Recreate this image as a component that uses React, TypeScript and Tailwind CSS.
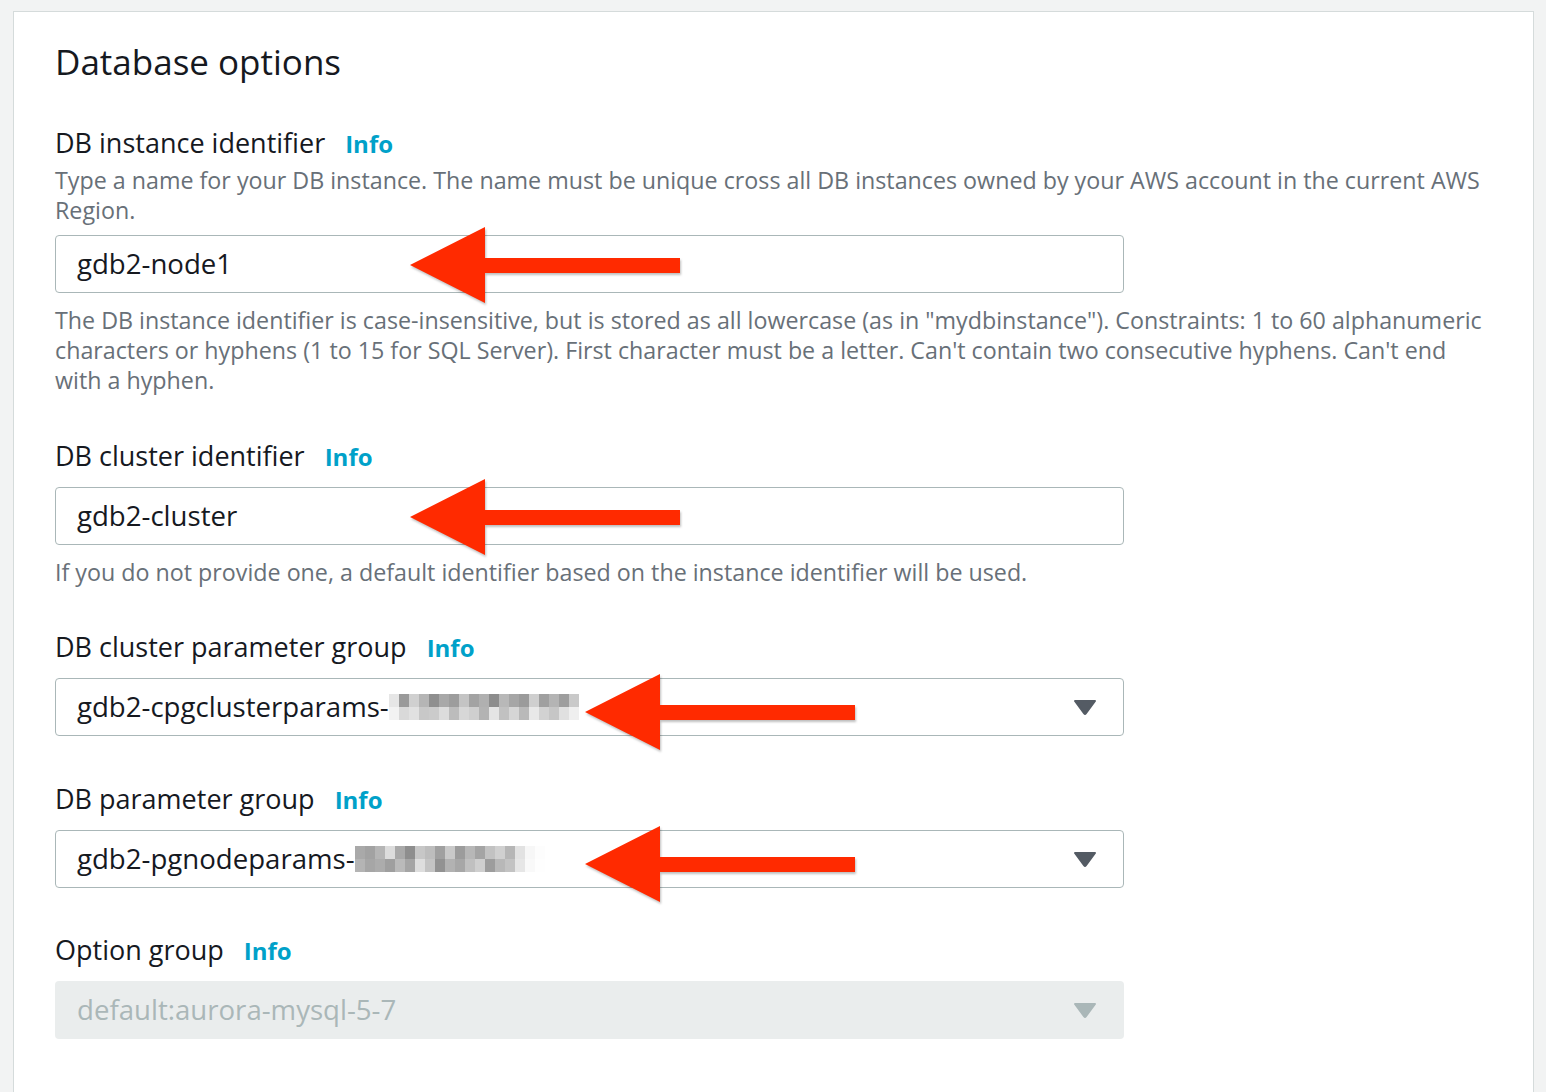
import React from 'react';

const font = { fontFamily: '"Open Sans", "Noto Sans", sans-serif' };

// little pixelated blur that hides part of a value
const Mosaic = ({ cells }: { cells: string[][] }) => (
  <span className="inline-flex flex-col align-middle">
    {cells.map((row, i) => (
      <span key={i} className="flex">
        {row.map((c, j) => (
          <span key={j} className="w-[10px] h-[13px]" style={{ backgroundColor: c }} />
        ))}
      </span>
    ))}
  </span>
);

const Arrow = ({ className }: { className: string }) => (
  <svg
    className={`absolute pointer-events-none drop-shadow-[1px_2px_1px_rgba(0,0,0,0.25)] ${className}`}
    width="272"
    height="76"
    viewBox="0 0 272 76"
  >
    <polygon points="0,38 75,0 75,31 270,31 270,46 75,46 75,76" fill="#ff2a00" />
  </svg>
);

const Label = ({ text }: { text: string }) => (
  <div className="flex items-baseline gap-[20px] h-[36px] leading-[36px]">
    <span className="text-[27px] text-[#16191f]">{text}</span>
    <span className="text-[24px] font-bold text-[#00a1c9]">Info</span>
  </div>
);

const Caret = ({ color }: { color: string }) => (
  <svg width="24" height="16" viewBox="0 0 24 16" className="ml-auto">
    <path d="M2 2 L22 2 L12.8 14.4 Q12 15.4 11.2 14.4 Z" fill={color} stroke={color} strokeWidth="2" strokeLinejoin="round" />
  </svg>
);

const mosaicA = [
  ['#e6e6e6', '#9a9a9a', '#d0d0d0', '#b5b5b5', '#8f8f8f', '#a8a8a8', '#9d9d9d', '#c4c4c4', '#a3a3a3', '#b0b0b0', '#8d8d8d', '#b8b8b8', '#a6a6a6', '#9b9b9b', '#cfcfcf', '#a0a0a0', '#b4b4b4', '#9e9e9e', '#c9c9c9'],
  ['#f2f2f2', '#d9d9d9', '#e1e1e1', '#c8c8c8', '#cbcbcb', '#dcdcdc', '#bcbcbc', '#d7d7d7', '#cfcfcf', '#b3b3b3', '#e4e4e4', '#c1c1c1', '#d6d6d6', '#b9b9b9', '#e8e8e8', '#d2d2d2', '#c6c6c6', '#e0e0e0', '#efefef'],
];

const mosaicB = [
  ['#a9a9a9', '#a2a2a2', '#b5b5b5', '#dcdcdc', '#a9a9a9', '#8e8e8e', '#c7c7c7', '#bdbdbd', '#a0a0a0', '#c9c9c9', '#9c9c9c', '#b7b7b7', '#a4a4a4', '#c2c2c2', '#d0d0d0', '#b6b6b6', '#e2e2e2', '#f7f7f7', '#fdfdfd'],
  ['#b4b4b4', '#a6a6a6', '#acacac', '#9f9f9f', '#bababa', '#a5a5a5', '#dedede', '#c4c4c4', '#929292', '#b2b2b2', '#a7a7a7', '#c0c0c0', '#cfcfcf', '#9d9d9d', '#b8b8b8', '#c3c3c3', '#e6e6e6', '#f9f9f9', '#fefefe'],
];

export default function App() {
  return (
    <div className="min-h-[1092px] bg-[#f2f3f3] pt-[11px] pl-[13px] pr-[12px] overflow-hidden" style={font}>
      <div className="bg-white border-l border-t border-r border-[#d5dbdb] min-h-[1081px] pl-[41px] pt-[28px]">
        <h2 className="text-[35px] leading-[44px] text-[#16191f]">Database options</h2>

        <div className="w-[1069px] mt-[41px]">
          {/* DB instance identifier */}
          <Label text="DB instance identifier" />
          <p className="text-[23.25px] leading-[30px] text-[#687078] mt-[4px] w-[1436px]">
            Type a name for your DB instance. The name must be unique cross all DB instances owned by your AWS account in the current AWS Region.
          </p>
          <div className="relative mt-[10px]">
            <div className="h-[58px] border border-[#aab7b8] rounded-[4px] flex items-center px-[21px] text-[27.6px] text-[#16191f]">
              gdb2-node1
            </div>
            <Arrow className="left-[355px] top-[-8px]" />
          </div>
          <p className="text-[23.25px] leading-[30px] text-[#687078] mt-[12px] w-[1436px]">
            The DB instance identifier is case-insensitive, but is stored as all lowercase (as in "mydbinstance"). Constraints: 1 to 60 alphanumeric characters or hyphens (1 to 15 for SQL Server). First character must be a letter. Can't contain two consecutive hyphens. Can't end with a hyphen.
          </p>

          {/* DB cluster identifier */}
          <div className="mt-[43px]">
            <Label text="DB cluster identifier" />
            <div className="relative mt-[13px]">
              <div className="h-[58px] border border-[#aab7b8] rounded-[4px] flex items-center px-[21px] text-[27.6px] text-[#16191f]">
                gdb2-cluster
              </div>
              <Arrow className="left-[355px] top-[-8px]" />
            </div>
            <p className="text-[23.25px] leading-[30px] text-[#687078] mt-[12px] w-[1436px]">
              If you do not provide one, a default identifier based on the instance identifier will be used.
            </p>
          </div>

          {/* DB cluster parameter group */}
          <div className="mt-[42px]">
            <Label text="DB cluster parameter group" />
            <div className="relative mt-[13px]">
              <div className="h-[58px] border border-[#aab7b8] rounded-[4px] flex items-center pl-[21px] pr-[26px] text-[27.6px] text-[#16191f]">
                <span>gdb2-cpgclusterparams-</span>
                <Mosaic cells={mosaicA} />
                <Caret color="#545b64" />
              </div>
              <Arrow className="left-[530px] top-[-4px]" />
            </div>
          </div>

          {/* DB parameter group */}
          <div className="mt-[45px]">
            <Label text="DB parameter group" />
            <div className="relative mt-[13px]">
              <div className="h-[58px] border border-[#aab7b8] rounded-[4px] flex items-center pl-[21px] pr-[26px] text-[27.6px] text-[#16191f]">
                <span>gdb2-pgnodeparams-</span>
                <Mosaic cells={mosaicB} />
                <Caret color="#545b64" />
              </div>
              <Arrow className="left-[530px] top-[-4px]" />
            </div>
          </div>

          {/* Option group */}
          <div className="mt-[44px]">
            <Label text="Option group" />
            <div className="mt-[13px] h-[58px] bg-[#eaeded] rounded-[4px] flex items-center pl-[22px] pr-[27px] text-[27.6px] text-[#aab7b8]">
              <span>default:aurora-mysql-5-7</span>
              <Caret color="#aab7b8" />
            </div>
          </div>
        </div>
      </div>
    </div>
  );
}
